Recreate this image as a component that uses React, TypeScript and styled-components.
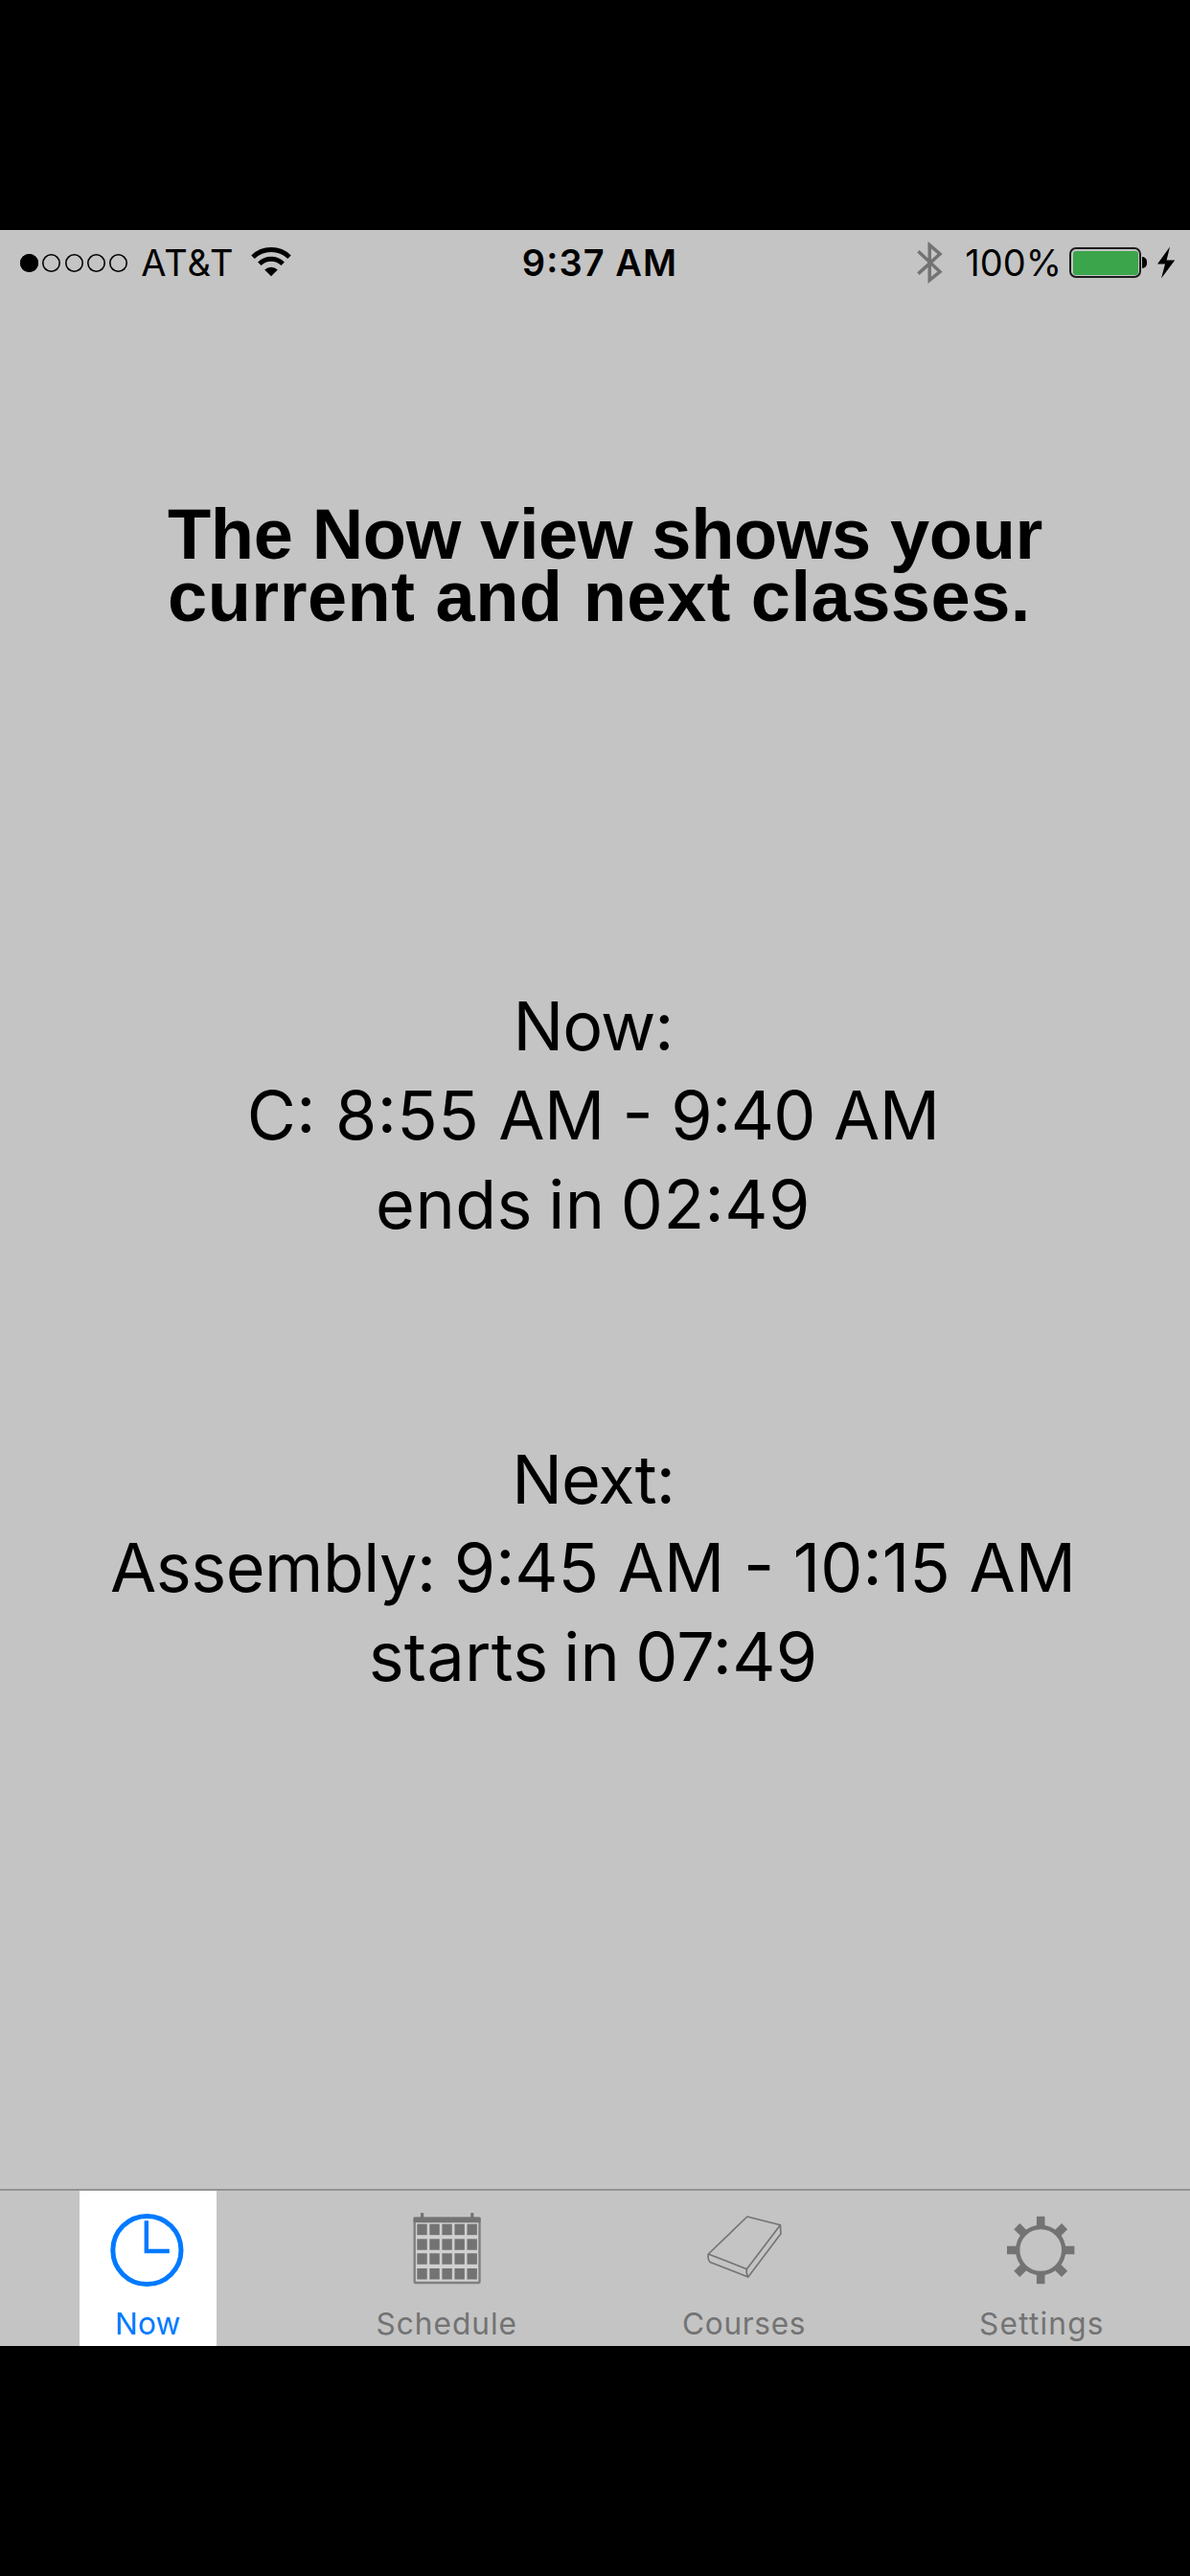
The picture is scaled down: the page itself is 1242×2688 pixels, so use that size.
import React from "react";
import styled, { createGlobalStyle } from "styled-components";

const INK = "#000000";
const MUTED = "#737373";
const BLUE = "#007aff";

const GlobalStyle = createGlobalStyle`
  html, body { margin: 0; padding: 0; background: #000; }
  * { box-sizing: border-box; }
`;

const Page = styled.div`
  width: 1242px;
  height: 2688px;
  padding: 240px 0;
  background: #000;
  overflow: hidden;
  font-family: Inter, "Liberation Sans", sans-serif;
  font-feature-settings: "calt" 1;
  color: ${INK};
`;

const Screen = styled.div`
  display: flex;
  flex-direction: column;
  width: 100%;
  height: 2208px;
  background: #c4c4c4;
`;

const StatusBar = styled.header`
  display: grid;
  grid-template-columns: 1fr auto 1fr;
  align-items: center;
  height: 68px;
  padding: 0 15px 0 21px;
  font-size: 38px;
  line-height: 46px;
`;

const StatusGroup = styled.div<{ $end?: boolean }>`
  display: flex;
  align-items: center;
  justify-content: ${(p) => (p.$end ? "flex-end" : "flex-start")};
`;

const Signal = styled.div`
  display: flex;
  gap: 4.3px;
`;

const Dot = styled.span<{ $on?: boolean }>`
  width: 19px;
  height: 19px;
  box-shadow: inset 0 0 0 1.6px ${INK};
  border-radius: 50%;
  background: ${(p) => (p.$on ? INK : "transparent")};
`;

const Carrier = styled.span`
  margin: 0 17px 0 14px;
  letter-spacing: 1.08px;
`;

const Clock = styled.time`
  font-weight: 600;
  letter-spacing: 1.08px;
  margin-right: -4px;
`;

const Percent = styled.span`
  margin: 0 8px 0 23px;
`;

const Battery = styled.span`
  width: 75px;
  height: 32px;
  padding: 1.5px;
  border: 2px solid #1c1c1c;
  border-radius: 7px;
`;

const BatteryFill = styled.span`
  display: block;
  height: 100%;
  border-radius: 3px;
  background: #3aa54b;
`;

const BatteryCap = styled.span`
  width: 5px;
  height: 12px;
  margin: 0 10px 0 1px;
  border-radius: 0 6px 6px 0;
  background: ${INK};
`;

const Content = styled.main`
  display: flex;
  flex-direction: column;
  flex: 1;
`;

const Title = styled.h1`
  margin: 218px 0 0 175px;
  font-family: "Liberation Sans", Arial, sans-serif;
  font-size: 74px;
  font-weight: 700;
  line-height: 64.7px;
  white-space: nowrap;
`;

const TitleLine = styled.div<{ $track: number }>`
  letter-spacing: ${(p) => p.$track}px;
`;

const Period = styled.section<{ $top: number }>`
  margin: ${(p) => p.$top}px 4px 0 0;
  text-align: center;
  font-size: 70px;
  line-height: 92.7px;
  white-space: nowrap;
`;

const PeriodLine = styled.div<{ $track: number; $word?: number }>`
  letter-spacing: ${(p) => p.$track}px;
  word-spacing: ${(p) => p.$word ?? 0}px;
`;

const Segment = styled.span<{ $track: number }>`
  letter-spacing: ${(p) => p.$track}px;
`;

const TabBar = styled.nav`
  display: grid;
  grid-template-columns: repeat(4, 1fr);
  justify-items: center;
  height: 164px;
  border-top: 2px solid #939393;
`;

const Tab = styled.div<{ $active?: boolean }>`
  display: flex;
  flex-direction: column;
  align-items: center;
  height: 162px;
  padding-top: 22px;
  width: ${(p) => (p.$active ? "142.5px" : "auto")};
  margin-right: ${(p) => (p.$active ? "2px" : "0")};
  background: ${(p) => (p.$active ? "#fff" : "transparent")};
  color: ${(p) => (p.$active ? BLUE : MUTED)};
`;

const TabIcon = styled.svg`
  width: 80px;
  height: 80px;
  flex: none;
`;

const TabLabel = styled.span<{ $track: number }>`
  margin-top: 18px;
  font-size: 31.6px;
  line-height: 38px;
  letter-spacing: ${(p) => p.$track}px;
  margin-right: ${(p) => -p.$track}px;
`;

const WifiIcon = () => (
  <svg width="42" height="32" viewBox="0 0 42 32" fill="none" stroke={INK} strokeWidth="5">
    <path d="M2 10.2 A27.5 27.5 0 0 1 40 10.2" />
    <path d="M8.8 17.2 A17.4 17.4 0 0 1 33.2 17.2" />
    <path d="M14.2 23.4 A10 10 0 0 1 27.8 23.4 L21 30.3 Z" fill={INK} stroke="none" />
  </svg>
);

const BluetoothIcon = () => (
  <svg width="28" height="46" viewBox="0 0 28 46" fill="none" stroke={MUTED} strokeWidth="3.5">
    <path d="M2.4 11.2 L25 32.6 L14.2 41.4 V4.6 L25 14 L2.4 34.6" />
  </svg>
);

const BoltIcon = () => (
  <svg width="20" height="34" viewBox="0 0 20 34" fill={INK}>
    <path d="M14 0.5 L1 18.6 H9 L5 33.5 L19.2 14.5 H10.6 Z" />
  </svg>
);

const NowIcon = () => (
  <TabIcon viewBox="0 0 80 80" fill="none" stroke="currentColor">
    <circle cx="39.4" cy="40" r="35.6" strokeWidth="5" />
    <path d="M38.8 9.3 V41 H62.8" strokeWidth="4.4" />
  </TabIcon>
);

const columns = [0, 1, 2, 3, 4];
const rowTops = [12.7, 28.3, 43.3, 59];

const ScheduleIcon = () => (
  <TabIcon viewBox="0 0 80 80">
    <rect x="7" y="10" width="67.2" height="64" fill="#d0d0d0" />
    <rect x="6.7" y="7" width="67.8" height="67" rx="1" fill="none" stroke="#7f7f7f" strokeWidth="2.4" />
    <rect x="5.6" y="5.4" width="70" height="5.8" rx="1" fill="currentColor" />
    <rect x="13" y="1" width="3.2" height="8" rx="1" fill="currentColor" />
    <rect x="65.2" y="1" width="3.2" height="8" rx="1" fill="currentColor" />
    {rowTops.map((y) =>
      columns.map((c) => (
        <rect key={`${y}-${c}`} x={9.3 + c * 13.05} y={y} width="10.4" height="11.5" fill="currentColor" />
      ))
    )}
  </TabIcon>
);

const CoursesIcon = () => (
  <TabIcon viewBox="0 0 80 80" fill="none" stroke="currentColor" strokeWidth="1.6" strokeLinejoin="round">
    <path d="M43.9 5 L78.4 13.7 L43.4 59.7 L3.3 44 Z" />
    <path d="M3.3 44 Q2.2 49.5 5 52.4 L44.9 68 L79 22.7 L78.4 13.7" />
    <path d="M43.4 59.7 Q42.4 63.5 44.9 68" />
  </TabIcon>
);

const teeth = [0, 45, 90, 135, 180, 225, 270, 315];

const SettingsIcon = () => (
  <TabIcon viewBox="0 0 80 80">
    <circle cx="39.2" cy="40" r="24" fill="none" stroke="currentColor" strokeWidth="4.4" />
    {teeth.map((a) => (
      <rect key={a} x="34.9" y="4.8" width="8.6" height="11" fill="currentColor" transform={`rotate(${a} 39.2 40)`} />
    ))}
  </TabIcon>
);

export default function App() {
  return (
    <>
      <GlobalStyle />
      <Page>
        <Screen>
          <StatusBar>
            <StatusGroup>
              <Signal>
                <Dot $on />
                <Dot />
                <Dot />
                <Dot />
                <Dot />
              </Signal>
              <Carrier>AT&amp;T</Carrier>
              <WifiIcon />
            </StatusGroup>
            <Clock>9:37 AM</Clock>
            <StatusGroup $end>
              <BluetoothIcon />
              <Percent>100%</Percent>
              <Battery>
                <BatteryFill />
              </Battery>
              <BatteryCap />
              <BoltIcon />
            </StatusGroup>
          </StatusBar>

          <Content>
            <Title>
              <TitleLine $track={-0.35}>The Now view shows your</TitleLine>
              <TitleLine $track={0.5}>current and next classes.</TitleLine>
            </Title>
            <Period $top={370}>
              <PeriodLine $track={-1}>Now:</PeriodLine>
              <PeriodLine $track={-0.6}>
                <Segment $track={0.4}>C: 8:55 </Segment>AM - 9:40 AM
              </PeriodLine>
              <PeriodLine $track={0.5} $word={-4}>ends in 02:49</PeriodLine>
            </Period>
            <Period $top={194}>
              <PeriodLine $track={-1}>Next:</PeriodLine>
              <PeriodLine $track={0}>
                <Segment $track={-0.5}>Assembly: </Segment>9:45 AM - 10:15 AM
              </PeriodLine>
              <PeriodLine $track={0.27} $word={-4}>starts in 07:49</PeriodLine>
            </Period>
          </Content>

          <TabBar>
            <Tab $active>
              <NowIcon />
              <TabLabel $track={0.2}>Now</TabLabel>
            </Tab>
            <Tab>
              <ScheduleIcon />
              <TabLabel $track={1}>Schedule</TabLabel>
            </Tab>
            <Tab>
              <CoursesIcon />
              <TabLabel $track={0.65}>Courses</TabLabel>
            </Tab>
            <Tab>
              <SettingsIcon />
              <TabLabel $track={1.2}>Settings</TabLabel>
            </Tab>
          </TabBar>
        </Screen>
      </Page>
    </>
  );
}
